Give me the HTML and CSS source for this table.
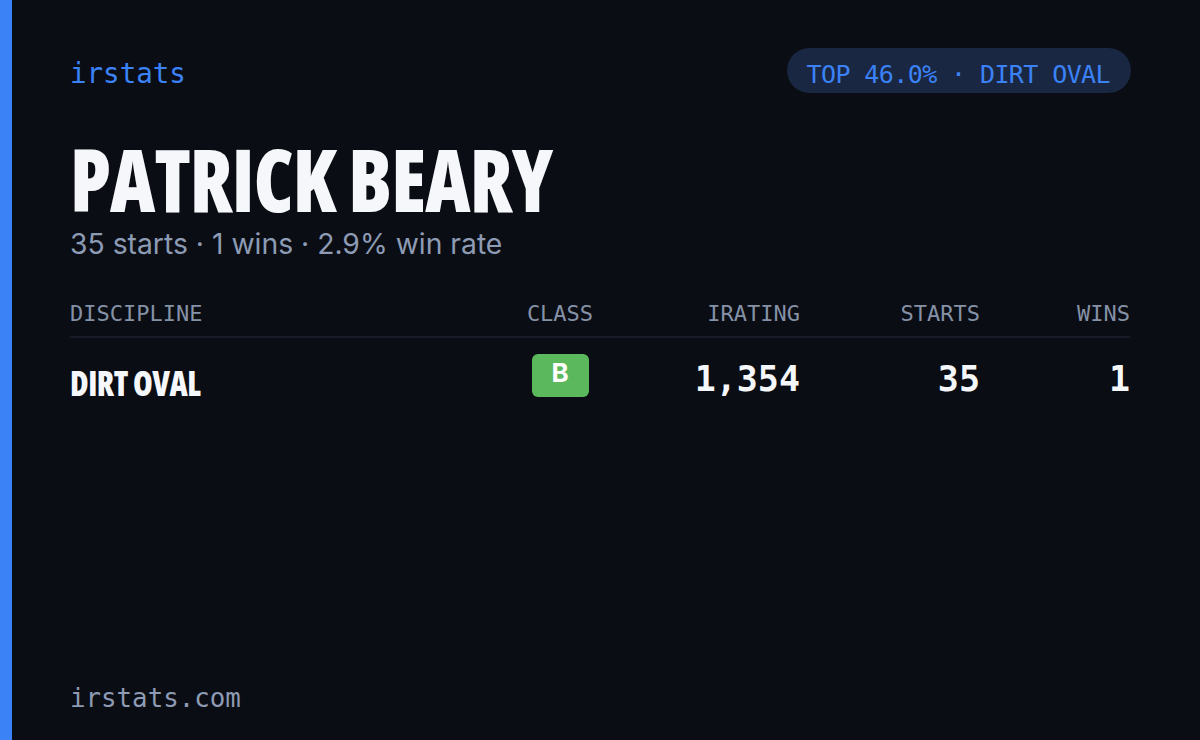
FILE: index.html
```html
<!DOCTYPE html>
<html lang="en">
<head>
<meta charset="utf-8">
<title>irstats – Patrick Beary</title>
<link rel="stylesheet" href="styles.css">
</head>
<body>
<main class="card">
  <header class="top">
    <div class="brand">irstats</div>
    <div class="pill">TOP 46.0% · DIRT OVAL</div>
  </header>
  <h1 class="name"><span class="squeeze">PATRICK BEARY</span></h1>
  <p class="summary">35 starts · 1 wins · 2.9% win rate</p>
  <section class="table">
    <div class="row head">
      <div class="th">DISCIPLINE</div>
      <div class="th center">CLASS</div>
      <div class="th right">IRATING</div>
      <div class="th right">STARTS</div>
      <div class="th right">WINS</div>
    </div>
    <div class="row body">
      <div class="disc"><span class="squeeze">DIRT OVAL</span></div>
      <div class="center"><span class="badge">B</span></div>
      <div class="num right">1,354</div>
      <div class="num right">35</div>
      <div class="num right">1</div>
    </div>
  </section>
  <footer class="foot">irstats.com</footer>
</main>
</body>
</html>
```
FILE: styles.css
```css
html, body {
  margin: 0;
  padding: 0;
  background: #0a0d14;
}
.card {
  box-sizing: border-box;
  width: 1200px;
  height: 740px;
  border-left: 12px solid #3b82f6;
  padding: 48px 69px 27px 58px;
  display: flex;
  flex-direction: column;
  background: #0a0d14;
  color: #f5f7fa;
}
.top {
  display: flex;
  justify-content: space-between;
  align-items: flex-start;
  height: 45px;
}
.brand {
  font-family: "DejaVu Sans Mono", monospace;
  font-size: 27.5px;
  line-height: 39px;
  padding-top: 6px;
  color: #3b82f6;
}
.pill {
  box-sizing: border-box;
  height: 45px;
  padding: 8px 21px 0 20px;
  line-height: 37px;
  border-radius: 23px;
  background: #1a2742;
  color: #3b82f6;
  font-family: "DejaVu Sans Mono", monospace;
  font-size: 25px;
  letter-spacing: -0.6px;
}
.squeeze {
  display: inline-block;
  transform-origin: left center;
  white-space: nowrap;
}
.name {
  margin: 42px 0 0;
  font-family: "Open Sans", sans-serif;
  font-stretch: 75%;
  font-weight: 800;
  font-size: 87px;
  line-height: 87px;
  letter-spacing: -1px;
  color: #f5f7fa;
}
.name .squeeze {
  transform: scaleX(0.906);
}
.summary {
  margin: 4px 0 0;
  font-family: "Inter", sans-serif;
  font-size: 28.3px;
  line-height: 36px;
  color: #8d9bb4;
}
.table {
  margin-top: 39px;
  margin-right: 1px;
}
.row {
  display: grid;
  grid-template-columns: 1fr 120px 180px 180px 150px;
  align-items: start;
}
.head {
  padding-bottom: 9px;
  border-bottom: 2px solid #181c27;
}
.th {
  font-family: "DejaVu Sans Mono", monospace;
  font-size: 22px;
  line-height: 26px;
  color: #8591a6;
}
.center { text-align: center; }
.right { text-align: right; }
.disc {
  padding-top: 25px;
  font-family: "Open Sans", sans-serif;
  font-stretch: 75%;
  font-weight: 800;
  font-size: 35px;
  line-height: 40px;
  letter-spacing: -0.5px;
  color: #f5f7fa;
}
.disc .squeeze {
  transform: scaleX(0.907);
}
.badge {
  display: inline-flex;
  align-items: center;
  justify-content: center;
  margin-top: 16px;
  width: 57px;
  height: 43px;
  box-sizing: border-box;
  padding-bottom: 5px;
  border-radius: 6px;
  background: #5cb85c;
  color: #ffffff;
  font-family: "Inter", sans-serif;
  font-weight: 700;
  font-size: 26px;
  line-height: 1;
}
.num {
  padding-top: 21px;
  font-family: "DejaVu Sans Mono", monospace;
  font-weight: 700;
  font-size: 35px;
  line-height: 40px;
  color: #f5f7fa;
}
.foot {
  margin-top: auto;
  font-family: "DejaVu Sans Mono", monospace;
  font-size: 25.8px;
  line-height: 30px;
  color: #8d9bb4;
}
```
